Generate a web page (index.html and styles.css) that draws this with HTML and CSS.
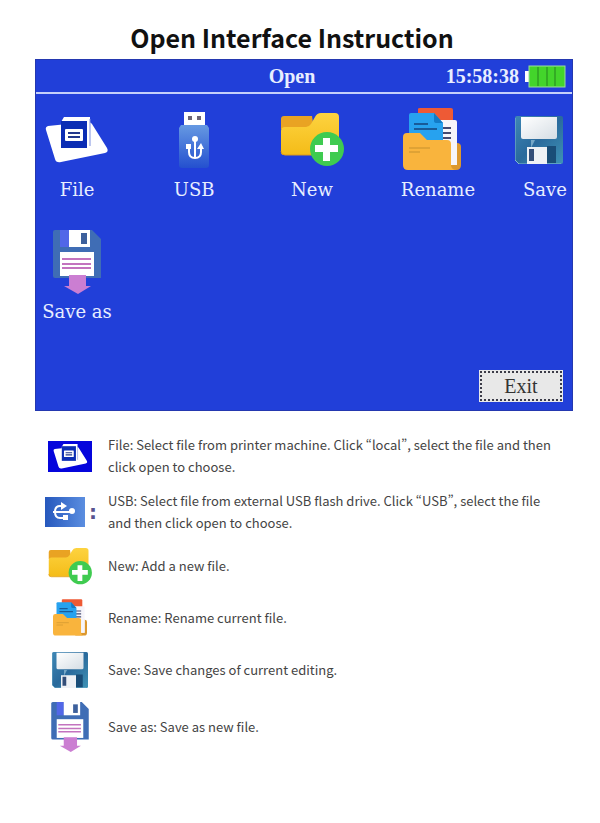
FILE: index.html
```
<!DOCTYPE html>
<html lang="en">

<head>
    <meta charset="UTF-8">
    <meta name="viewport" content="width=device-width, initial-scale=1.0">
    <title>Open Interface Instruction</title>
    <link rel="stylesheet" href="styles.css">
</head>

<body>
    <!-- Shared icons -->
    <svg class="sprite" aria-hidden="true">
        <defs>
            <linearGradient id="usb-blue" x1="0" y1="0" x2="0" y2="1">
                <stop offset="0" stop-color="#6699e2" />
                <stop offset="1" stop-color="#2450cf" />
            </linearGradient>
            <linearGradient id="usb-card" x1="0" y1="0" x2="1" y2="0">
                <stop offset="0" stop-color="#2658bd" />
                <stop offset="1" stop-color="#5b8ee0" />
            </linearGradient>
            <linearGradient id="folder-yellow" x1="0" y1="0" x2="0" y2="1">
                <stop offset="0" stop-color="#fdd340" />
                <stop offset="1" stop-color="#f4bc18" />
            </linearGradient>
            <linearGradient id="floppy-teal" x1="0" y1="0" x2="1" y2="1">
                <stop offset="0" stop-color="#3f87b5" />
                <stop offset="0.5" stop-color="#2a6a9c" />
                <stop offset="1" stop-color="#3f93b5" />
            </linearGradient>
            <linearGradient id="floppy-label" x1="0" y1="0" x2="1" y2="1">
                <stop offset="0" stop-color="#ffffff" />
                <stop offset="1" stop-color="#d5dde4" />
            </linearGradient>
        </defs>
        <symbol id="icon-file" viewBox="0 0 64 46">
            <path d="M3 9 Q0 10 1 13 L10 42 Q11 46 16 45 L60 36 Q64 35 62 31 L47 7 Q46 5 42 5Z" fill="#fff" />
            <path d="M16 5 L19 0 H45 V28 L42 31 H16Z" fill="#fff" />
            <path d="M45 2 V29" stroke="#7d8fe0" stroke-width="1" />
            <path d="M16 4 H42 V31 H16Z" fill="#0b2db4" />
            <rect x="20" y="12" width="18" height="12" rx="1" fill="#fff" />
            <path d="M23 16 H35 M23 20 H35" stroke="#23388c" stroke-width="2" />
        </symbol>
        <symbol id="icon-usb" viewBox="0 0 30 56">
            <rect x="5" y="0" width="21" height="15" fill="#fff" />
            <path d="M9 4 H13 V8 H9Z M18 4 H22 V8 H18Z" fill="#6c6575" />
            <path d="M2 13 H28 L30 16 V53 Q30 56 27 56 H3 Q0 56 0 53 V16Z" fill="url(#usb-blue)" />
            <path d="M16 28 V46 M10 35 V40 Q10 46 16 46 Q22 46 22 40 V36" fill="none" stroke="#fff" stroke-width="2" />
            <circle cx="16" cy="27" r="3" fill="#fff" />
            <path d="M7 32 H12 V37 H7Z M18 37 L22 31 L25 37Z" fill="#fff" />
        </symbol>
        <symbol id="icon-usb-card" viewBox="0 0 40 30">
            <rect width="40" height="30" fill="url(#usb-card)" />
            <path d="M8 15 H28 M19 9 H15 Q10 9 10 15 Q10 21 15 21 H19" fill="none" stroke="#fff" stroke-width="2" />
            <circle cx="27" cy="14" r="3" fill="#fff" />
            <path d="M16 5 L22 9 L16 13Z M18 18 H23 V23 H18Z" fill="#fff" />
        </symbol>
        <symbol id="icon-new" viewBox="0 0 64 54">
            <path d="M1 6 Q1 3 4 3 H32 L34 16 H1Z" fill="#e9a323" />
            <path d="M1 18 Q1 14 5 14 H26 Q29 14 31 11 L35 4 Q37 0 41 0 H55 Q59 0 59 4 V38 Q59 42 55 42 H4 Q1 42 1 39Z" fill="url(#folder-yellow)" />
            <path d="M1 38 Q1 42 5 42 H35" fill="none" stroke="#de9b1d" stroke-width="1" />
            <circle cx="47" cy="36" r="17" fill="#3fcb50" />
            <path d="M43 25 H50 V32 H58 V39 H50 V48 H43 V39 H35 V32 H43Z" fill="#fff" />
        </symbol>
        <symbol id="icon-rename" viewBox="0 0 58 64">
            <path d="M15 1 Q15 0 17 0 H48 Q50 0 50 2 V20 H15Z" fill="#ee5a35" />
            <path d="M54 35 Q58 35 58 39 V57 Q58 62 53 62 H38 V35Z" fill="#dc982e" />
            <path d="M35 12 H52 Q54 12 54 14 V57 H36Z" fill="#f6f5fa" />
            <path d="M38 20 H48 M38 25 H48 M38 30 H48" stroke="#434a72" stroke-width="2" />
            <path d="M6 7 Q6 5 8 5 H31 L40 15 V36 H6Z" fill="#27a2ef" />
            <path d="M31 5 V13 Q31 15 34 15 H40Z" fill="#137bc7" />
            <path d="M11 16 H25 M11 21 H34" stroke="#185b99" stroke-width="2" />
            <path d="M0 29 Q0 25 4 25 H17 L24 32 H44 Q48 32 48 36 V57 Q48 62 54 62 H5 Q0 62 0 57Z" fill="#f9b43d" />
            <path d="M6 40 H27 M6 44 H17" stroke="#c6912e" stroke-width="1" />
            <path d="M48 36 V57 H54 V35" fill="#f6f5fa" />
        </symbol>
        <symbol id="icon-save" viewBox="0 0 48 48">
            <path d="M2 0 H46 Q48 0 48 2 V46 Q48 48 46 48 H4 L0 44 V2 Q0 0 2 0Z" fill="url(#floppy-teal)" />
            <path d="M0 2 V44 L4 48 H46" fill="none" stroke="#81bad1" stroke-width="1" />
            <path d="M6 1 H42 V21 Q42 23 40 23 H8 Q6 23 6 21Z" fill="url(#floppy-label)" />
            <path d="M16 24 H20 L16 32Z" fill="#75a7c7" />
            <rect x="32" y="30" width="9" height="17" fill="#194d77" />
            <rect x="12" y="31" width="20" height="17" fill="#eef1f5" />
            <rect x="14" y="33" width="5" height="12" fill="#334e78" />
        </symbol>
        <symbol id="icon-save-as" viewBox="0 0 48 64">
            <path d="M2 0 H39 L48 9 V48 H2 Q0 48 0 46 V2 Q0 0 2 0Z" class="disk" />
            <rect x="7" y="0" width="9" height="17" fill="#5267e8" />
            <rect x="16" y="0" width="21" height="17" fill="#fff" />
            <rect x="28" y="3" width="6" height="11" fill="#3d609c" />
            <rect x="7" y="22" width="34" height="24" fill="#fff" />
            <path d="M9 29 H38 M9 34 H38 M9 38 H38" stroke="#c373bf" stroke-width="2" />
            <path d="M16 45 H33 V56 H38 L25 64 L11 56 H16Z" fill="#cb7ed2" />
        </symbol>
    </svg>

    <h1>Open Interface Instruction</h1>

    <main>
        <section class="screen">
            <header class="screen-bar">
                <h2>Open</h2>
                <div class="status">
                    <time>15:58:38</time>
                    <svg class="battery" viewBox="0 0 41 23" aria-label="Battery full">
                        <rect x="0" y="6" width="4" height="11" fill="#fff" />
                        <rect x="4" y="1" width="36" height="21" fill="#43d52b" stroke="#9adb9f" stroke-width="1" />
                        <path d="M13 2 V21 M22 2 V21 M30 2 V21" stroke="#24831f" stroke-width="1" />
                    </svg>
                </div>
            </header>

            <div class="menu">
                <button class="item" type="button">
                    <span class="item-icon"><svg class="pic-file"><use href="#icon-file" /></svg></span>
                    File
                </button>
                <button class="item" type="button">
                    <span class="item-icon"><svg class="pic-usb"><use href="#icon-usb" /></svg></span>
                    USB
                </button>
                <button class="item" type="button">
                    <span class="item-icon"><svg class="pic-new"><use href="#icon-new" /></svg></span>
                    New
                </button>
                <button class="item" type="button">
                    <span class="item-icon icon-left"><svg class="pic-rename"><use href="#icon-rename" /></svg></span>
                    Rename
                </button>
                <button class="item item-last" type="button">
                    <span class="item-icon icon-left"><svg class="pic-save"><use href="#icon-save" /></svg></span>
                    Save
                </button>
                <button class="item" type="button">
                    <span class="item-icon"><svg class="pic-save-as"><use href="#icon-save-as" /></svg></span>
                    Save as
                </button>
            </div>

            <div class="screen-footer">
                <button class="exit" type="button">Exit</button>
            </div>
        </section>

        <ul class="legend">
            <li>
                <span class="legend-icon"><svg class="small-file" viewBox="0 0 44 31"><rect width="44" height="31" fill="#0505dc" /><use href="#icon-file" x="5" y="3" width="35" height="25" /></svg></span>
                <p>File: Select file from printer machine. Click “local”, select the file and then click open to choose.</p>
            </li>
            <li>
                <span class="legend-icon usb-icon"><svg class="small-usb"><use href="#icon-usb-card" /></svg><b>:</b></span>
                <p>USB: Select file from external USB flash drive. Click “USB”, select the file and then click open to choose.</p>
            </li>
            <li>
                <span class="legend-icon"><svg class="small-new"><use href="#icon-new" /></svg></span>
                <p>New: Add a new file.</p>
            </li>
            <li>
                <span class="legend-icon"><svg class="small-rename"><use href="#icon-rename" /></svg></span>
                <p>Rename: Rename current file.</p>
            </li>
            <li>
                <span class="legend-icon"><svg class="small-save"><use href="#icon-save" /></svg></span>
                <p>Save: Save changes of current editing.</p>
            </li>
            <li>
                <span class="legend-icon"><svg class="small-save-as"><use href="#icon-save-as" /></svg></span>
                <p>Save as: Save as new file.</p>
            </li>
        </ul>
    </main>
</body>

</html>
```
FILE: styles.css
```
* {
    box-sizing: border-box;
}

body {
    margin: 0;
    padding: 16px 27px 40px 35px;
    background-color: #fff;
    font-family: "Noto Sans CJK SC", "Noto Sans", sans-serif;
    color: #444;
}

.sprite {
    position: absolute;
    width: 0;
    height: 0;
}

svg {
    display: block;
    flex: none;
}

h1 {
    margin: 0;
    padding-right: 24px;
    font-size: 25px;
    line-height: 43px;
    text-align: center;
    color: #111;
}

/* Machine screen */
.screen {
    background-color: #213fd9;
    border: 1px solid #2438b0;
    color: #e8eeff;
    font-family: "DejaVu Serif", serif;
}

.screen-bar {
    display: grid;
    grid-template-columns: 1fr auto 1fr;
    align-items: center;
    height: 34px;
    padding: 0 6px;
    border-bottom: 2px solid #c5d0fa;
}

.screen-bar h2 {
    grid-column: 2;
    margin: 0;
    padding-right: 24px;
    font-family: "Liberation Serif", serif;
    font-size: 20px;
    line-height: 24px;
}

.status {
    display: flex;
    justify-content: flex-end;
    align-items: center;
    gap: 6px;
    font-family: "Liberation Serif", serif;
    font-weight: bold;
    font-size: 20px;
    line-height: 24px;
}

.battery {
    width: 41px;
    height: 23px;
}

.menu {
    display: grid;
    grid-template-columns: 19% 21% 23% 24% 13%;
    row-gap: 28px;
    padding-top: 14px;
}

.item {
    display: flex;
    flex-direction: column;
    align-items: center;
    gap: 6px;
    padding: 0;
    background: none;
    border: none;
    color: inherit;
    font-family: inherit;
    font-size: 18px;
    line-height: 24px;
    white-space: nowrap;
    cursor: pointer;
}

.item:nth-child(5n + 1) {
    justify-self: start;
    width: 82px;
}

.item-last {
    justify-self: end;
    width: 54px;
}

.item-icon {
    display: flex;
    justify-content: center;
    align-items: center;
    height: 64px;
}

.icon-left {
    padding-right: 12px;
}

.pic-file {
    width: 64px;
    height: 46px;
}

.pic-usb {
    width: 30px;
    height: 56px;
}

.pic-new {
    width: 64px;
    height: 54px;
}

.pic-rename {
    width: 58px;
    height: 64px;
}

.pic-save {
    width: 48px;
    height: 48px;
}

.pic-save-as {
    width: 48px;
    height: 64px;
}

.disk {
    fill: #3f6db5;
}

.screen-footer {
    display: flex;
    justify-content: flex-end;
    padding: 46px 9px 8px;
}

.exit {
    width: 84px;
    height: 32px;
    padding: 0;
    background-color: #e8e8e8;
    border: 1px solid #e8e8e8;
    outline: 2px dotted #3c3c48;
    outline-offset: -3px;
    color: #333;
    font-family: "Liberation Serif", serif;
    font-size: 20px;
    cursor: pointer;
}

/* Explanations */
.legend {
    display: flex;
    flex-direction: column;
    gap: 12px;
    margin: 0;
    padding: 23px 0 0;
    list-style: none;
}

.legend li {
    display: flex;
    align-items: center;
    gap: 4px;
    min-height: 40px;
}

.legend p {
    flex: 1;
    margin: 0;
    padding-right: 8px;
    font-size: 13px;
    line-height: 22px;
    font-feature-settings: "pwid";
}

.legend-icon {
    display: flex;
    justify-content: center;
    align-items: center;
    width: 69px;
}

.usb-icon {
    justify-content: flex-end;
    gap: 4px;
    padding-right: 7px;
    color: #57548f;
    font-family: "DejaVu Sans", sans-serif;
    font-size: 20px;
    line-height: 24px;
}

.small-file {
    width: 44px;
    height: 31px;
}

.small-usb {
    width: 40px;
    height: 30px;
}

.small-new {
    width: 44px;
    height: 37px;
}

.small-rename {
    width: 34px;
    height: 38px;
}

.small-save {
    width: 36px;
    height: 36px;
}

.small-save-as {
    width: 38px;
    height: 50px;
}
```
